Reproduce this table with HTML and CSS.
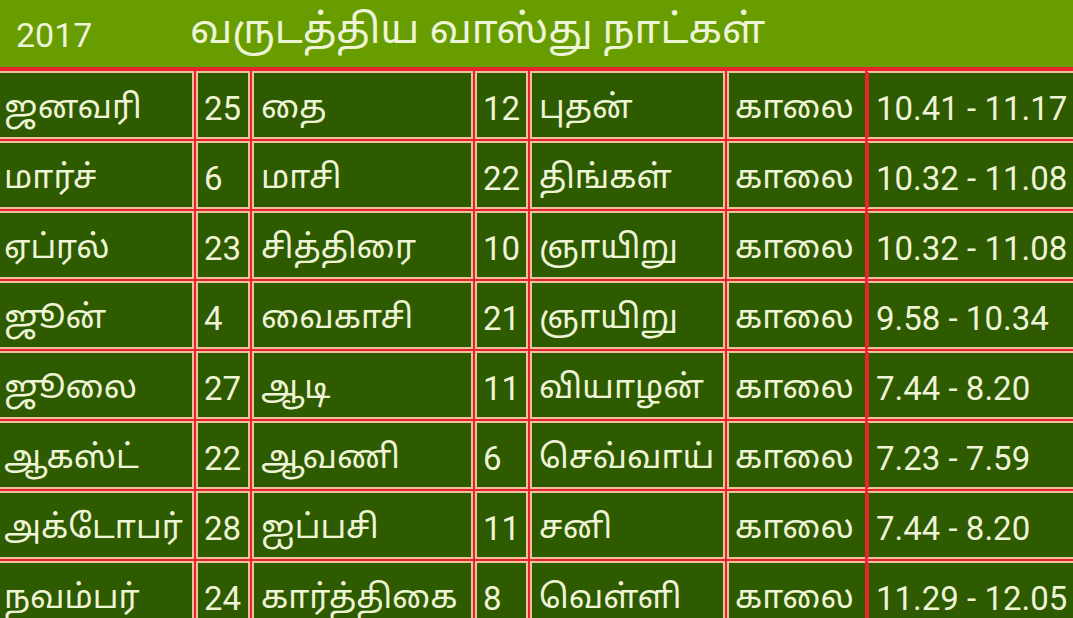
FILE: index.html
```html
<!DOCTYPE html>
<html lang="ta">
<head>
<meta charset="utf-8">
<title>வருடத்திய வாஸ்து நாட்கள்</title>
<link rel="stylesheet" href="styles.css">
</head>
<body>
<header class="top">
  <span class="year">2017</span>
  <span class="title">வருடத்திய வாஸ்து நாட்கள்</span>
</header>
<main class="grid">
  <div class="c c1">ஜனவரி</div><div class="c c2">25</div><div class="c c3">தை</div><div class="c c4">12</div><div class="c c5">புதன்</div><div class="c c6">காலை</div><div class="c c7">10.41 - 11.17</div>
  <div class="c c1">மார்ச்</div><div class="c c2">6</div><div class="c c3">மாசி</div><div class="c c4">22</div><div class="c c5">திங்கள்</div><div class="c c6">காலை</div><div class="c c7">10.32 - 11.08</div>
  <div class="c c1">ஏப்ரல்</div><div class="c c2">23</div><div class="c c3">சித்திரை</div><div class="c c4">10</div><div class="c c5">ஞாயிறு</div><div class="c c6">காலை</div><div class="c c7">10.32 - 11.08</div>
  <div class="c c1">ஜூன்</div><div class="c c2">4</div><div class="c c3">வைகாசி</div><div class="c c4">21</div><div class="c c5">ஞாயிறு</div><div class="c c6">காலை</div><div class="c c7">9.58 - 10.34</div>
  <div class="c c1">ஜூலை</div><div class="c c2">27</div><div class="c c3">ஆடி</div><div class="c c4">11</div><div class="c c5">வியாழன்</div><div class="c c6">காலை</div><div class="c c7">7.44 - 8.20</div>
  <div class="c c1">ஆகஸ்ட்</div><div class="c c2">22</div><div class="c c3">ஆவணி</div><div class="c c4">6</div><div class="c c5">செவ்வாய்</div><div class="c c6">காலை</div><div class="c c7">7.23 - 7.59</div>
  <div class="c c1">அக்டோபர்</div><div class="c c2">28</div><div class="c c3">ஐப்பசி</div><div class="c c4">11</div><div class="c c5">சனி</div><div class="c c6">காலை</div><div class="c c7">7.44 - 8.20</div>
  <div class="c c1">நவம்பர்</div><div class="c c2">24</div><div class="c c3">கார்த்திகை</div><div class="c c4">8</div><div class="c c5">வெள்ளி</div><div class="c c6">காலை</div><div class="c c7">11.29 - 12.05</div>
</main>
</body>
</html>
```
FILE: styles.css
```css
html, body {
  margin: 0;
  padding: 0;
  background: #2e5a00;
  overflow: hidden;
}
body {
  width: 1073px;
  height: 618px;
  font-family: Roboto, "Noto Sans Tamil", "Lohit Tamil", "Noto Sans", sans-serif;
  color: #eef4d6;
}
.top {
  height: 69px;
  background: #679d00;
  border-bottom: 2px solid #e8232b;
  display: flex;
  align-items: center;
  padding-left: 16px;
  box-sizing: border-box;
}
.year {
  font-size: 34px;
  width: 174px;
  padding-top: 3px;
}
.title {
  font-size: 40.5px;
  padding-bottom: 4px;
}
.grid {
  display: grid;
  grid-template-columns: 194px 54px 221px 53px 195px 138px 206px;
  grid-auto-rows: 68px;
  gap: 2px;
  padding-top: 2px;
  background: #e8232b;
}
.c {
  background: #2e5a00;
  border: 2px solid #edc09e;
  font-size: 33px;
  display: flex;
  align-items: center;
  padding-left: 5px;
  padding-top: 6px;
  white-space: nowrap;
  overflow: hidden;
  box-sizing: border-box;
}
.c1 { border-left: none; padding-left: 4px; }
.c2, .c4 { padding-left: 6px; }
.c3, .c5 { padding-left: 7px; }
.c6 { border-right: none; padding-left: 6px; }
.c7 { border-left: 2px solid #e8232b; border-right: none; padding-left: 7px; }
```
